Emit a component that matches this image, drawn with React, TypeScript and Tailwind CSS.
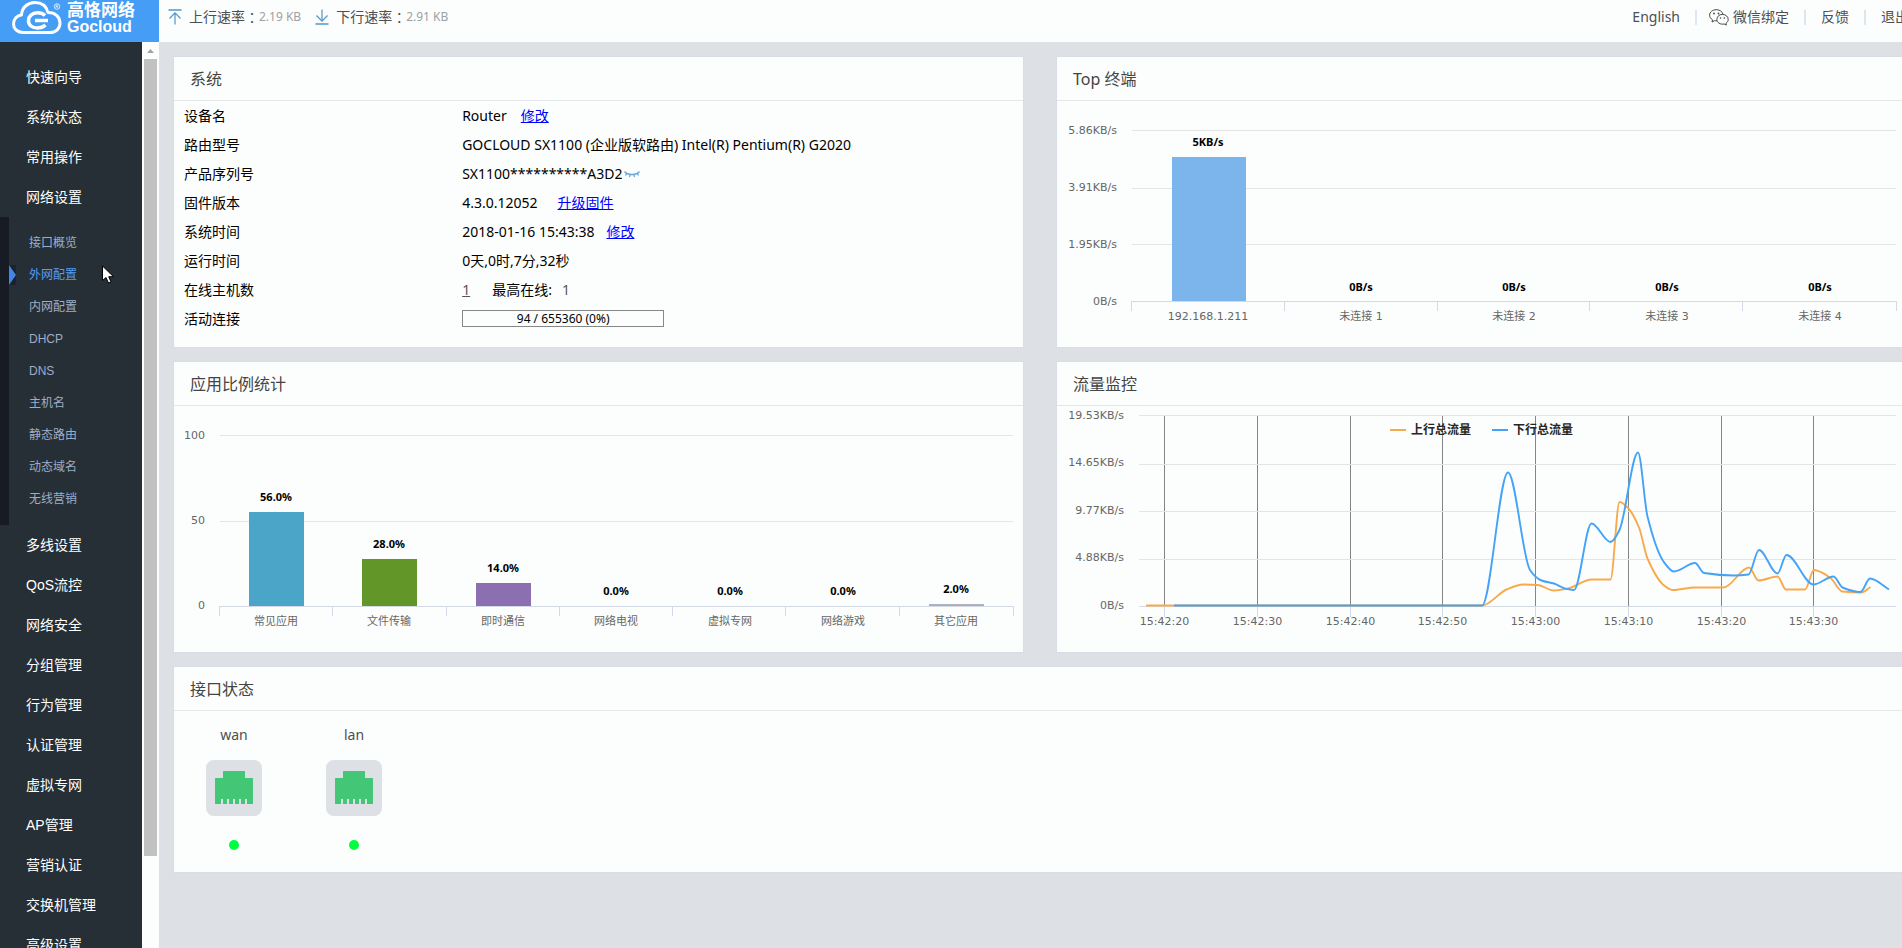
import React from 'react';

type Point = [number, number];

const menuTop = ['快速向导', '系统状态', '常用操作', '网络设置'];
const subMenu = ['接口概览', '外网配置', '内网配置', 'DHCP', 'DNS', '主机名', '静态路由', '动态域名', '无线营销'];
const menuBottom = [
  '多线设置', 'QoS流控', '网络安全', '分组管理', '行为管理', '认证管理',
  '虚拟专网', 'AP管理', '营销认证', '交换机管理', '高级设置',
];

const apps = [
  { name: '常见应用', value: 56, height: 94, color: '#4aa5c8' },
  { name: '文件传输', value: 28, height: 47, color: '#629629' },
  { name: '即时通信', value: 14, height: 23, color: '#8c6fb1' },
  { name: '网络电视', value: 0, height: 0, color: '#4aa5c8' },
  { name: '虚拟专网', value: 0, height: 0, color: '#4aa5c8' },
  { name: '网络游戏', value: 0, height: 0, color: '#4aa5c8' },
  { name: '其它应用', value: 2, height: 2, color: '#b0b1b6' },
];

const terminals = [
  { name: '192.168.1.211', label: '5KB/s', height: 144 },
  { name: '未连接 1', label: '0B/s', height: 0 },
  { name: '未连接 2', label: '0B/s', height: 0 },
  { name: '未连接 3', label: '0B/s', height: 0 },
  { name: '未连接 4', label: '0B/s', height: 0 },
];

const upload: Point[] = [
  [89, 199.5], [425, 199.5], [449.5, 183.5], [466.5, 178.5], [480.5, 179], [497, 184.5], [511, 182.5],
  [534.5, 173.5], [553.5, 173.5], [562.5, 96], [571.5, 102.5], [582, 121.5], [590.5, 152.5], [606.5, 179],
  [615.5, 184], [638, 181.5], [666.5, 181.5], [692, 161.5], [701.5, 174.5], [720.5, 170.5], [729, 183.5],
  [748, 183.5], [757, 164], [773, 171.5], [785.5, 185.5], [804.5, 186.5], [813.5, 181],
];

const download: Point[] = [
  [117, 199.5], [425, 199.5], [451, 66.5], [473, 164], [484.5, 174.5], [497, 177.5], [508, 182.5], [517, 184],
  [534.5, 117.5], [553.5, 136], [562.5, 124], [581, 46.5], [590.5, 110.5], [606.5, 155.5], [617, 165.5],
  [638, 157], [647, 167], [676.5, 169.5], [691.5, 168.5], [702, 144], [720.5, 167.5], [729.5, 149],
  [756.5, 178.5], [776.5, 170.5], [785.5, 181.5], [803.5, 186], [813, 172.5], [832, 183.5],
];

// Monotone cubic through the points, flat at local peaks
function spline(pts: Point[]) {
  const slopes = pts.slice(1).map((p, i) => (p[1] - pts[i][1]) / (p[0] - pts[i][0]));
  const tangents = pts.map((_, i) => {
    if (i === 0) return 0;
    if (i === pts.length - 1) return slopes[i - 1];
    const a = slopes[i - 1];
    const b = slopes[i];
    return a * b <= 0 ? 0 : (2 * a * b) / (a + b);
  });
  let d = `M${pts[0][0]} ${pts[0][1]}`;
  for (let i = 1; i < pts.length; i++) {
    const [x0, y0] = pts[i - 1];
    const [x1, y1] = pts[i];
    const h = (x1 - x0) / 3;
    d += `C${x0 + h} ${y0 + h * tangents[i - 1]} ${x1 - h} ${y1 - h * tangents[i]} ${x1} ${y1}`;
  }
  return d;
}

const axisFont = "text-[11px] fill-[#666666] font-['DejaVu_Sans','Noto_Sans_CJK_SC',sans-serif]";
const valueFont = "text-[11px] font-bold fill-black font-['Noto_Sans','Noto_Sans_CJK_SC',sans-serif]";

function Card({ title, children }: { title: string; children: React.ReactNode }) {
  return (
    <section className="bg-[#fcfefd] shadow-[0_0_2px_#d0d5e2]">
      <h2 className="h-11 px-4 flex items-center text-base text-[#444444] border-b border-[#e4e6e7]">{title}</h2>
      {children}
    </section>
  );
}

function Row({ label, children }: { label: string; children: React.ReactNode }) {
  return (
    <tr className="h-[29px]">
      <th scope="row" className="w-[33%] pl-2.5 text-left font-normal">{label}</th>
      <td className="pl-2">
        <div className="flex items-center">{children}</div>
      </td>
    </tr>
  );
}

function Logo() {
  return (
    <a href="#" className="w-[159px] h-[42px] shrink-0 bg-[#459df5] text-white flex items-start pl-3">
      <svg viewBox="0 0 52 36" className="w-[52px] h-9" fill="none" stroke="white">
        <path d="M11 32.500C5 32.500 1.500 28.500 1.500 24C1.500 19 5 15.500 9.500 15C10 7 16 2.500 23 2.500C30 2.500 34.500 6.500 36 12.500C43 12.500 48 16.500 48 23C48 28.500 44 32.500 38 32.500Z" strokeWidth="3" strokeLinejoin="round" />
        <path d="M33 15.500C31 13.500 28.500 12.800 25.500 12.800C20 12.800 16.500 16.300 16.500 20.500C16.500 25 20 28 25.500 28C29 28 31.500 27 33.500 25" strokeWidth="3.500" />
        <path d="M23 20.500H36" strokeWidth="3.500" />
        <circle cx="45" cy="6.500" r="2.800" strokeWidth="0.700" />
        <path d="M44 8.200V5H45.200C46.500 5 46.500 6.600 45.200 6.600H44M45.200 6.600L46.300 8.200" strokeWidth="0.600" />
      </svg>
      <span className="ml-[3px] mt-0.5 flex flex-col font-bold font-['Liberation_Sans','Noto_Sans_CJK_SC',sans-serif]">
        <span className="text-[17px] leading-[18px]">高恪网络</span>
        <span className="text-base leading-[14px]">Gocloud</span>
      </span>
    </a>
  );
}

function RateIcon({ down = false }: { down?: boolean }) {
  return (
    <svg viewBox="0 0 14 16" className="w-3.5 h-4 mr-[7px]" fill="none" stroke="#4d97cc">
      {down ? (
        <>
          <path d="M7 0.500V12M1.500 6.500L7 12.200L12.500 6.500" strokeWidth="1.200" />
          <path d="M0.500 15H13.500" strokeWidth="1.500" />
        </>
      ) : (
        <>
          <path d="M7 15.500V4M1.500 9.500L7 3.800L12.500 9.500" strokeWidth="1.200" />
          <path d="M0.500 1H13.500" strokeWidth="1.500" />
        </>
      )}
    </svg>
  );
}

function WechatIcon() {
  return (
    <svg viewBox="0 0 20 17" className="w-5 h-[17px] mr-1" fill="none" stroke="#444444" strokeWidth="1" strokeLinejoin="round">
      <path d="M8 11.800C7.200 11.900 6.300 11.800 5.500 11.600L3 13L3.500 10.800C1.600 9.600 0.600 8 0.600 6.200C0.600 3 3.700 0.700 7.300 0.700C10.700 0.700 13.400 2.600 14 5.300" />
      <path d="M13.300 5.400C16.700 5.400 19.200 7.600 19.200 10.400C19.200 12 18.400 13.300 17 14.200L17.300 16.100L15.200 15C11.200 15.800 7.900 13.600 7.900 10.400C7.900 7.600 10.300 5.400 13.300 5.400Z" />
      <g fill="#444444" stroke="none">
        <circle cx="5" cy="4.500" r="0.900" />
        <circle cx="9.500" cy="4.500" r="0.900" />
        <circle cx="11.500" cy="9" r="0.800" />
        <circle cx="15.300" cy="9" r="0.800" />
      </g>
    </svg>
  );
}

function Rate({ label, value, down }: { label: string; value: string; down?: boolean }) {
  return (
    <span className="flex items-center">
      <RateIcon down={down} />
      {label}
      {/* The TC face centres the full-width colon */}
      <span className="font-['Noto_Sans_CJK_TC',sans-serif] leading-5">：</span>
      <span className="text-xs text-[#9da1a5]">{value}</span>
    </span>
  );
}

function Header() {
  return (
    <header className="h-[42px] flex bg-[#fcfefd] text-sm text-[#4d4f53]">
      <Logo />
      <div className="flex-1 flex items-center justify-between pl-[9px] -mr-[7px] pb-2">
        <div className="flex items-center gap-3.5">
          <Rate label="上行速率" value="2.19 KB" />
          <Rate label="下行速率" value="2.91 KB" down />
        </div>
        <nav className="flex items-center whitespace-nowrap">
          <a href="#">English</a>
          <span className="w-0.5 h-[15px] bg-[#dde7f5] ml-[15px] mr-3" />
          <a href="#" className="flex items-center"><WechatIcon />微信绑定</a>
          <span className="w-0.5 h-[15px] bg-[#dde5ee] mx-[15px]" />
          <a href="#">反馈</a>
          <span className="w-0.5 h-[15px] bg-[#dde5ee] mx-[15px]" />
          <a href="#">退出</a>
        </nav>
      </div>
    </header>
  );
}

function MenuItem({ text }: { text: string }) {
  return (
    <li>
      <a href="#" className="h-10 pl-[26px] flex items-center text-sm text-white">{text}</a>
    </li>
  );
}

function Sidebar() {
  return (
    <aside className="w-[159px] shrink-0 flex overflow-hidden">
      <nav className="flex-1 pt-[15px] bg-[#262f36] font-['Liberation_Sans','Noto_Sans_CJK_SC',sans-serif]">
        <ul>
          {menuTop.map((t) => <MenuItem key={t} text={t} />)}
          <li>
            <ul className="py-2.5 border-l-[9px] border-[#171b23]">
              {subMenu.map((t) => (
                <li key={t} className="relative">
                  {t === '外网配置' && (
                    <svg viewBox="0 0 7 20" className="absolute left-0 top-1.5 w-[7px] h-5 bg-[#1b222a]">
                      <path d="M0 0L7 10L0 20Z" fill="#4285e6" />
                    </svg>
                  )}
                  <a
                    href="#"
                    className={`h-8 pl-5 flex items-center text-xs ${t === '外网配置' ? 'text-[#559cf7]' : 'text-[#9dadc9]'}`}
                  >
                    {t}
                  </a>
                </li>
              ))}
            </ul>
          </li>
          {menuBottom.map((t) => <MenuItem key={t} text={t} />)}
        </ul>
      </nav>
      {/* Scroll track */}
      <div className="w-[17px] bg-[#fcfefd] flex flex-col items-center">
        <svg viewBox="0 0 17 17" className="w-[17px] h-[17px]">
          <path d="M5 11L8.500 7L12 11Z" fill="#a3a3a3" />
        </svg>
        <div className="w-[13px] h-[88%] bg-[#c1c1c1]" />
      </div>
    </aside>
  );
}

function SystemCard() {
  return (
    <Card title="系统">
      <table className="w-full text-sm text-black mb-3.5">
        <tbody>
          <Row label="设备名">Router<a href="#" className="ml-3.5 text-[#0000ff] underline">修改</a></Row>
          <Row label="路由型号">GOCLOUD SX1100 (企业版软路由) Intel(R) Pentium(R) G2020</Row>
          <Row label="产品序列号">
            SX1100**********A3D2
            <button type="button" aria-label="显示序列号" className="ml-0.5">
              <svg viewBox="0 0 16 8" className="w-4 h-2" fill="none" stroke="#6ba6d6" strokeWidth="1.300">
                <path d="M0.500 1.500C4 5.500 12 5.500 15.500 1.500M2.500 3.500L1.500 5.500M6 4.800L5.500 7M10 4.800L10.500 7M13.500 3.500L14.500 5.500" />
              </svg>
            </button>
          </Row>
          <Row label="固件版本">4.3.0.12052<a href="#" className="ml-5 text-[#0000ff] underline">升级固件</a></Row>
          <Row label="系统时间">2018-01-16 15:43:38<a href="#" className="ml-3 text-[#0000ff] underline">修改</a></Row>
          <Row label="运行时间">0天,0时,7分,32秒</Row>
          <Row label="在线主机数">
            <a href="#" className="mr-[22px] text-[#555555] underline">1</a>
            最高在线:<span className="ml-2.5 text-[#555555]">1</span>
          </Row>
          <Row label="活动连接">
            <div className="w-[202px] h-[17px] border border-[#888888] flex items-center justify-center text-xs">
              94 / 655360 (0%)
            </div>
          </Row>
        </tbody>
      </table>
    </Card>
  );
}

function GridLines({ ys, from }: { ys: number[]; from: number }) {
  return <>{ys.map((y) => <path key={y} d={`M${from} ${y}H839`} stroke="#e4e6e6" />)}</>;
}

function TerminalCard() {
  const step = 153;
  return (
    <Card title="Top 终端">
      <svg viewBox="0 0 849 246" className="w-full block">
        <GridLines ys={[29.5, 87.5, 143.5]} from={75} />
        {['5.86KB/s', '3.91KB/s', '1.95KB/s', '0B/s'].map((t, i) => (
          <text key={t} x="60" y={33 + i * 57} textAnchor="end" className={axisFont}>{t}</text>
        ))}
        {terminals.map((t, i) => (
          <g key={t.name}>
            <rect x={115 + i * step} y={200 - t.height} width="74" height={t.height} fill="#7cb4ec" />
            <text x={151 + i * step} y={i === 0 ? 45 : 190} textAnchor="middle" className={valueFont}>{t.label}</text>
            <text x={151 + i * step} y="219" textAnchor="middle" className={axisFont}>{t.name}</text>
          </g>
        ))}
        <path d="M74 200.500H840M74.500 200V210M227.500 200V210M380.500 200V210M532.500 200V210M685.500 200V210M839.500 200V210" stroke="#d3d9e6" />
      </svg>
    </Card>
  );
}

function AppCard() {
  const step = 113.4;
  return (
    <Card title="应用比例统计">
      <svg viewBox="0 0 849 246" className="w-full block">
        <GridLines ys={[29.5, 115.5]} from={46} />
        {[100, 50, 0].map((t, i) => (
          <text key={t} x="31" y={33 + i * 85} textAnchor="end" className={axisFont}>{t}</text>
        ))}
        {apps.map((a, i) => {
          const x = Math.round(75 + i * step);
          return (
            <g key={a.name}>
              <rect x={x} y={200 - a.height} width="55" height={a.height} fill={a.color} />
              <text x={x + 27} y={189 - a.height} textAnchor="middle" className={valueFont}>{a.value.toFixed(1)}%</text>
              <text x={x + 27} y="219" textAnchor="middle" className={axisFont}>{a.name}</text>
            </g>
          );
        })}
        <path d="M45 200.500H840M45.500 200V210M158.500 200V210M272.500 200V210M385.500 200V210M498.500 200V210M611.500 200V210M725.500 200V210M839.500 200V210" stroke="#d3d9e6" />
      </svg>
    </Card>
  );
}

function TrafficCard() {
  const times = ['15:42:20', '15:42:30', '15:42:40', '15:42:50', '15:43:00', '15:43:10', '15:43:20', '15:43:30'];
  const xs = [107.5, 200.5, 293.5, 385.5, 478.5, 571.5, 664.5, 756.5];
  const ys = [13, 60, 108, 155, 203];
  return (
    <Card title="流量监控">
      <svg viewBox="0 0 849 246" className="w-full block">
        {xs.map((x, i) => (
          <g key={x}>
            <path d={`M${x} 10V200`} stroke="#858585" />
            <path d={`M${x} 201V211`} stroke="#d3d9e6" />
            <text x={x} y="219" textAnchor="middle" className={axisFont}>{times[i]}</text>
          </g>
        ))}
        <GridLines ys={[9.5, 58.5, 105.5, 153.5]} from={82} />
        <path d="M82 200.500H839" stroke="#d3d9e6" />
        {['19.53KB/s', '14.65KB/s', '9.77KB/s', '4.88KB/s', '0B/s'].map((t, i) => (
          <text key={t} x="67" y={ys[i]} textAnchor="end" className={axisFont}>{t}</text>
        ))}
        <path d={spline(upload)} fill="none" stroke="#f8a94c" strokeWidth="1.900" />
        <path d={spline(download)} fill="none" stroke="#44a3f7" strokeWidth="1.900" />
        <path d="M333 24H349" stroke="#f8a94c" strokeWidth="2" />
        <path d="M435 24H451" stroke="#44a3f7" strokeWidth="2" />
        <g className="text-xs font-bold fill-[#262626] font-['Noto_Sans_CJK_SC',sans-serif]">
          <text x="354" y="28">上行总流量</text>
          <text x="456" y="28">下行总流量</text>
        </g>
      </svg>
    </Card>
  );
}

function Port({ name }: { name: string }) {
  return (
    <div className="w-[120px] flex flex-col items-center text-sm text-[#4d4f53]">
      <span className="leading-6">{name}</span>
      <svg viewBox="0 0 56 56" className="w-14 h-14 mt-[13px] mb-6">
        <rect width="56" height="56" rx="8" fill="#dde0e5" />
        <path
          d="M17 18V11.500L17.500 11H38.500L39 11.500V18H46.500L47 18.500V43.500L46.500 44H41V39H39V44H35V39H33V44H29V39H27V44H23V39H21V44H17V39H15V44H9.500L9 43.500V18.500L9.500 18Z"
          fill="#43c776"
        />
      </svg>
      <span className="w-2.5 h-2.5 rounded-full bg-[#00ff40]" />
    </div>
  );
}

export default function App() {
  return (
    <div className="h-screen flex flex-col overflow-hidden bg-[#dde0e5] font-['Noto_Sans','Noto_Sans_CJK_SC',sans-serif]">
      <Header />
      <div className="flex-1 min-h-0 flex">
        <Sidebar />
        <main className="flex-1 pt-[15px] pl-[15px] -mr-1">
          <div className="grid grid-cols-2 gap-x-[34px] gap-y-[15px]">
            <SystemCard />
            <TerminalCard />
            <AppCard />
            <TrafficCard />
            <div className="col-span-2">
              <Card title="接口状态">
                <div className="flex pt-3 pb-[22px]">
                  <Port name="wan" />
                  <Port name="lan" />
                </div>
              </Card>
            </div>
          </div>
        </main>
      </div>

      {/* Mouse pointer */}
      <svg viewBox="0 0 13 20" className="absolute left-[102px] top-[265px] w-[13px] h-5 pointer-events-none">
        <path d="M0.500 1V15.500L4 12.500L6.500 18L9 17L6.700 11.700H11.500Z" fill="white" stroke="black" />
      </svg>
    </div>
  );
}
